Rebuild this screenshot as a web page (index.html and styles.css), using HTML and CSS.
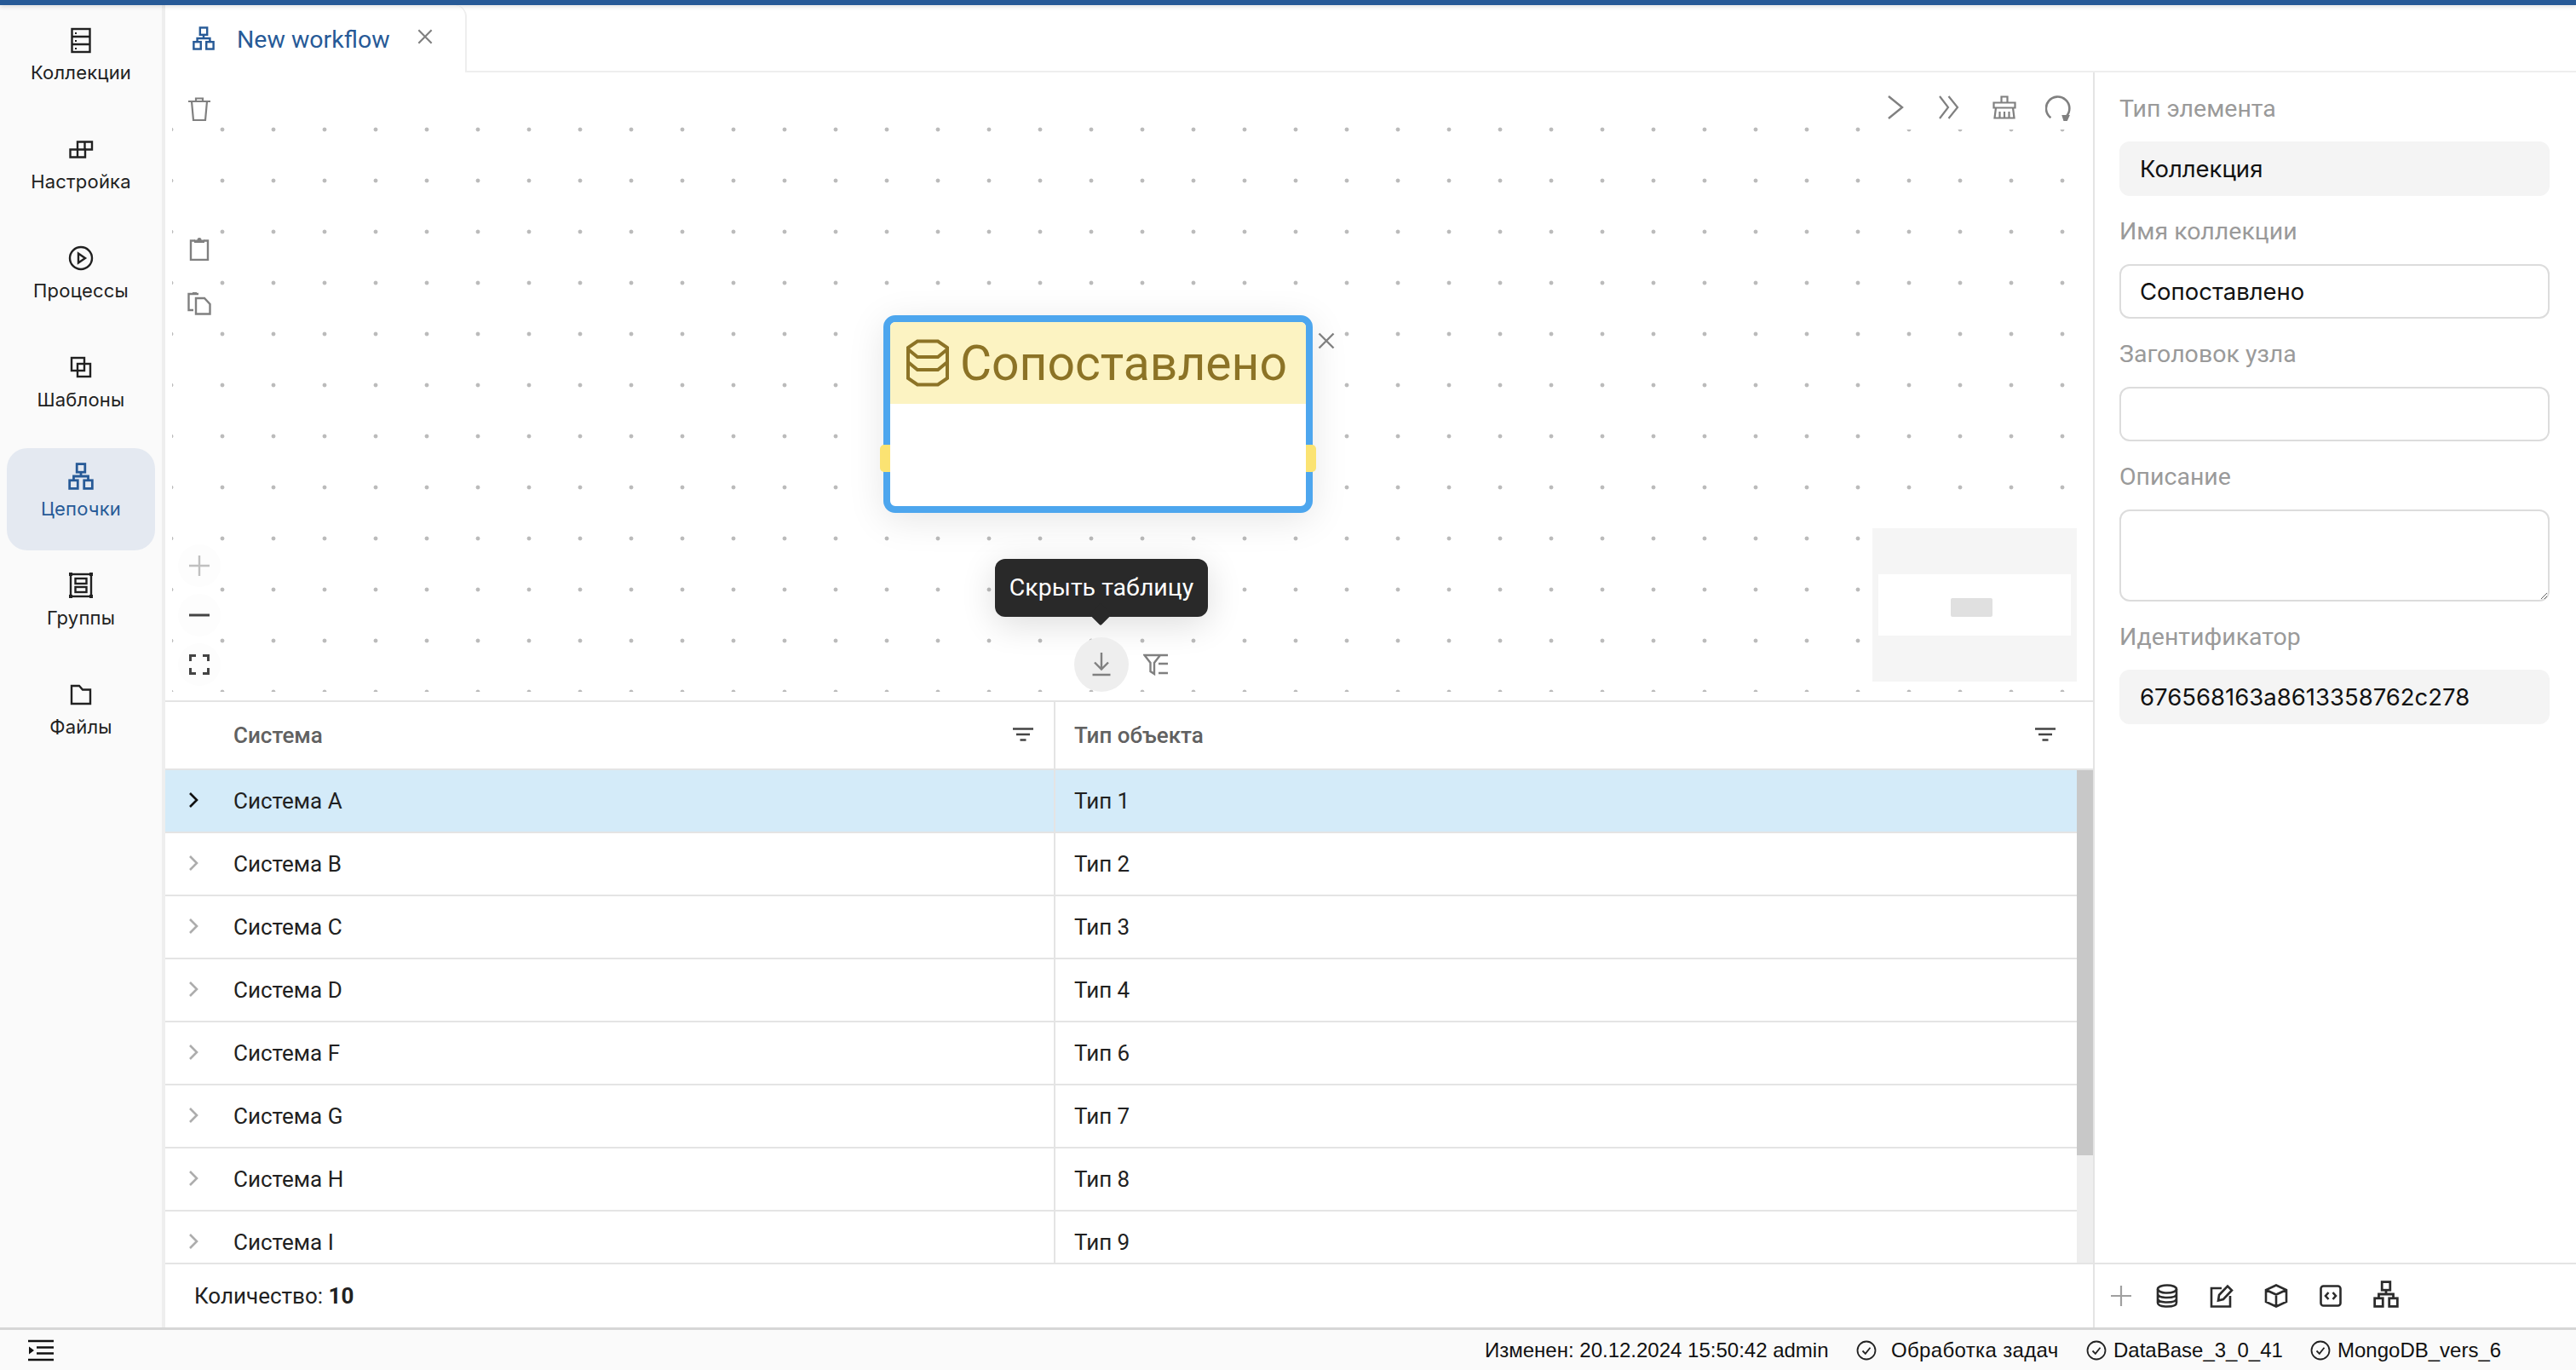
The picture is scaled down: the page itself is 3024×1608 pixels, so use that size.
FILE: index.html
```html
<!DOCTYPE html>
<html lang="ru">
<head>
<meta charset="utf-8">
<title>New workflow</title>
<link rel="stylesheet" href="styles.css">
</head>
<body>
<svg class="sprite" width="0" height="0">
  <symbol id="org" viewBox="0 0 28 30"><g fill="none" stroke="currentColor" stroke-width="2.6"><rect x="9.5" y="1.5" width="9" height="9"/><rect x="1.5" y="19.5" width="9" height="9"/><rect x="17.5" y="19.5" width="9" height="9"/><path d="M14 10.5V15M6 19.5V15H22V19.5"/></g></symbol>
  <symbol id="funnel" viewBox="0 0 24 16"><path d="M0 1.5H24M4 8H20M8.500 14.500H15.500" fill="none" stroke="currentColor" stroke-width="2.500"/></symbol>
  <symbol id="chev" viewBox="0 0 14 20"><path d="M3 2L11 10L3 18" fill="none" stroke="currentColor" stroke-width="2.600"/></symbol>
  <symbol id="check" viewBox="0 0 24 24"><circle cx="12" cy="12" r="10.500" fill="none" stroke="currentColor" stroke-width="1.800"/><path d="M7.500 12.500L10.800 15.800L16.500 8.800" fill="none" stroke="currentColor" stroke-width="1.800"/></symbol>
  <symbol id="x" viewBox="0 0 20 20"><path d="M1.500 1.500L18.500 18.500M18.500 1.500L1.500 18.500" fill="none" stroke="currentColor" stroke-width="2.400"/></symbol>
</svg>
<div class="app">
  <div class="topbar"></div>
  <div class="main">
    <nav class="sidebar">
      <a class="nav-item"><svg class="nav-icon" viewBox="0 0 32 32"><g fill="none" stroke="currentColor" stroke-width="2.400"><rect x="5.500" y="3" width="21" height="27"/><path d="M5.500 12H26.500M5.500 21H26.500"/></g><path d="M9 7h2v2H9zM9 16h2v2H9zM9 25h2v2H9z" fill="currentColor"/></svg><span>Коллекции</span></a>
      <a class="nav-item"><svg class="nav-icon" viewBox="0 0 32 32"><g fill="none" stroke="currentColor" stroke-width="2.400"><path d="M3.500 16.500H21V25.500H3.500ZM12 16.500V25.500"/><path d="M12 16.500V7.500H29V16.500H21M20.500 7.500V16.500"/></g></svg><span>Настройка</span></a>
      <a class="nav-item"><svg class="nav-icon" viewBox="0 0 32 32"><g fill="none" stroke="currentColor" stroke-width="2.400"><circle cx="16" cy="16" r="13"/><path d="M13 10.500L21 16L13 21.500Z"/></g></svg><span>Процессы</span></a>
      <a class="nav-item"><svg class="nav-icon" viewBox="0 0 32 32"><g fill="none" stroke="currentColor" stroke-width="2.400"><rect x="5" y="5" width="15" height="15"/><rect x="12" y="12" width="15" height="15"/></g></svg><span>Шаблоны</span></a>
      <a class="nav-item active"><svg class="nav-icon" viewBox="0 0 28 30"><use href="#org"/></svg><span>Цепочки</span></a>
      <a class="nav-item"><svg class="nav-icon" viewBox="0 0 32 32"><g fill="none" stroke="currentColor" stroke-width="2.400"><rect x="4" y="3" width="24" height="26"/><rect x="9.500" y="8" width="13" height="6"/><rect x="9.500" y="18" width="13" height="6"/></g><path d="M2 1h4v4H2zM26 1h4v4h-4zM2 27h4v4H2zM26 27h4v4h-4z" fill="currentColor"/></svg><span>Группы</span></a>
      <a class="nav-item"><svg class="nav-icon" viewBox="0 0 32 32"><path d="M5 6H14L18 10.500H27V27H5Z" fill="none" stroke="currentColor" stroke-width="2.400"/></svg><span>Файлы</span></a>
    </nav>
    <div class="workspace">
      <div class="tabs">
        <div class="tab">
          <svg class="tab-icon"><use href="#org"/></svg>
          <span class="tab-title">New workflow</span>
          <svg class="tab-close"><use href="#x"/></svg>
        </div>
      </div>
      <div class="content">
        <div class="center">
          <section class="canvas">
            <div class="dots"></div>

            <div class="tool-column tool-edit">
              <svg class="tool" viewBox="0 0 28 28"><g fill="none" stroke="#808080" stroke-width="2.200"><path d="M1 5H27M5 5L7 27H21L23 5M10 5V1.500H18V5"/></g></svg>
              <svg class="tool tool-paste" viewBox="0 0 28 28"><g fill="none" stroke="#808080" stroke-width="2.400"><path d="M9 4.500H4V27H24V4.500H19"/></g><path d="M8 7V3.500H11.500A2.500 2.500 0 0 1 16.500 3.500H20V7Z" fill="#808080"/></svg>
              <svg class="tool tool-copy" viewBox="0 0 28 28"><g fill="none" stroke="#808080" stroke-width="2.400"><path d="M7 22H1.500V3H13"/><path d="M10 8H20L26.500 15V26.500H10Z"/></g><path d="M6 3.500H11V1H6Z" fill="#808080"/></svg>
            </div>

            <div class="tool-column tool-zoom">
              <div class="zoom-btn"><svg viewBox="0 0 24 24"><path d="M12 0V24M0 12H24" stroke="#c0c0c0" stroke-width="2.400"/></svg></div>
              <div class="zoom-btn"><svg viewBox="0 0 24 24"><path d="M0 12H24" stroke="#444" stroke-width="3"/></svg></div>
              <div class="zoom-btn"><svg viewBox="0 0 24 24"><path d="M8 1.500H1.500V8M16 1.500H22.500V8M8 22.500H1.500V16M16 22.500H22.500V16" fill="none" stroke="#444" stroke-width="3"/></svg></div>
            </div>

            <div class="run-tools">
              <svg class="run-chev" viewBox="0 0 20 28"><path d="M1 1L17 14L1 27" fill="none" stroke="#808080" stroke-width="2.400"/></svg>
              <svg class="run-double" viewBox="0 0 24 28"><path d="M1 1L11 14L1 27M11.500 1L22 14L11.500 27" fill="none" stroke="#808080" stroke-width="2.200"/></svg>
              <svg class="run-broom" viewBox="0 0 28 28"><g fill="none" stroke="#808080" stroke-width="2.200"><path d="M10.500 8.500V1.500H17.500V8.500M1.500 8.500H26.500V14.500H1.500ZM4 14.500L2.500 26.500H25.500L24 14.500M8.500 19V26.500M14 19V26.500M19.500 19V26.500"/></g></svg>
              <svg class="run-reload" viewBox="0 0 28 28"><g fill="none" stroke="#808080" stroke-width="2.400"><path d="M6 24.500A12.800 12.800 0 1 1 23 23"/></g><path d="M18 21.500H27L24 28H20Z" fill="#808080"/></svg>
            </div>

            <article class="node">
              <div class="node-frame">
                <header class="node-head">
                  <svg class="node-icon" viewBox="0 0 50 56"><path d="M13 2.500H37L48 10V46L37 53.500H13L2 46V10ZM2 12L13 21H37L48 12M2 27L13 36H37L48 27" fill="none" stroke="#8c7326" stroke-width="4"/></svg>
                  <span>Сопоставлено</span>
                </header>
              </div>
              <i class="handle handle-left"></i>
              <i class="handle handle-right"></i>
              <svg class="node-close"><use href="#x"/></svg>
            </article>

            <div class="tooltip">Скрыть таблицу</div>
            <div class="table-toggle"><svg viewBox="0 0 24 28"><path d="M12 0V19M4 11.500L12 19.500L20 11.500M1.500 26H22.500" fill="none" stroke="#808080" stroke-width="2.400"/></svg></div>
            <svg class="filter-list" viewBox="0 0 30 26"><g fill="none" stroke="#808080" stroke-width="2.400"><path d="M1.500 2H20L13 11V24L8.500 21V11ZM20 2H29M18 12H29M18 23H29"/></g></svg>

            <div class="minimap"><div class="minimap-view"><div class="minimap-node"></div></div></div>
          </section>

          <section class="grid">
            <div class="grid-head">
              <div class="cell cell-a"><span>Система</span><svg class="head-filter"><use href="#funnel"/></svg></div>
              <div class="cell cell-b"><span>Тип объекта</span><svg class="head-filter"><use href="#funnel"/></svg></div>
            </div>
            <div class="grid-body">
              <div class="rows">
                <div class="row selected"><svg class="row-chev"><use href="#chev"/></svg><div class="cell cell-a">Система A</div><div class="cell cell-b">Тип 1</div></div>
                <div class="row"><svg class="row-chev"><use href="#chev"/></svg><div class="cell cell-a">Система B</div><div class="cell cell-b">Тип 2</div></div>
                <div class="row"><svg class="row-chev"><use href="#chev"/></svg><div class="cell cell-a">Система C</div><div class="cell cell-b">Тип 3</div></div>
                <div class="row"><svg class="row-chev"><use href="#chev"/></svg><div class="cell cell-a">Система D</div><div class="cell cell-b">Тип 4</div></div>
                <div class="row"><svg class="row-chev"><use href="#chev"/></svg><div class="cell cell-a">Система F</div><div class="cell cell-b">Тип 6</div></div>
                <div class="row"><svg class="row-chev"><use href="#chev"/></svg><div class="cell cell-a">Система G</div><div class="cell cell-b">Тип 7</div></div>
                <div class="row"><svg class="row-chev"><use href="#chev"/></svg><div class="cell cell-a">Система H</div><div class="cell cell-b">Тип 8</div></div>
                <div class="row"><svg class="row-chev"><use href="#chev"/></svg><div class="cell cell-a">Система I</div><div class="cell cell-b">Тип 9</div></div>
              </div>
              <div class="scrolltrack"><div class="scrollthumb"></div></div>
            </div>
            <footer class="grid-foot">Количество:&nbsp;<b>10</b></footer>
          </section>
        </div>

        <aside class="panel">
          <div class="fields">
            <label class="field"><span class="field-label">Тип элемента</span><input class="input readonly" value="Коллекция" readonly></label>
            <label class="field"><span class="field-label">Имя коллекции</span><input class="input" value="Сопоставлено"></label>
            <label class="field"><span class="field-label">Заголовок узла</span><input class="input" value=""></label>
            <label class="field"><span class="field-label">Описание</span><textarea class="input area"></textarea></label>
            <label class="field"><span class="field-label">Идентификатор</span><input class="input readonly" value="676568163a8613358762c278" readonly></label>
          </div>
          <div class="panel-foot">
            <svg class="pf pf-plus" viewBox="0 0 24 24"><path d="M12 0V24M0 12H24" stroke="#a0a0a0" stroke-width="2.200"/></svg>
            <svg class="pf" viewBox="0 0 28 28"><g fill="none" stroke="#2b2b2b" stroke-width="2.600"><ellipse cx="14" cy="6" rx="11" ry="4.500"/><path d="M3 6V22C3 25 8 26.500 14 26.500S25 25 25 22V6M3 11.500C3 14.500 8 16 14 16S25 14.500 25 11.500M3 17C3 20 8 21.500 14 21.500S25 20 25 17"/></g></svg>
            <svg class="pf" viewBox="0 0 28 28"><g fill="none" stroke="#2b2b2b" stroke-width="2.600"><path d="M14 5H2V26.500H24V14"/><path d="M11 13L21 2.500L26 7.500L16 18L10 19.500Z"/></g></svg>
            <svg class="pf" viewBox="0 0 28 28"><g fill="none" stroke="#2b2b2b" stroke-width="2.600"><path d="M14 1.500L26 7V21L14 26.500L2 21V7ZM2 7L14 12.500L26 7M14 12.500V26.500"/></g></svg>
            <svg class="pf" viewBox="0 0 28 28"><g fill="none" stroke="#2b2b2b" stroke-width="2.600"><rect x="2.500" y="2.500" width="23" height="23" rx="3"/><path d="M11.500 10L8 14L11.500 18M16.500 10L20 14L16.500 18"/></g></svg>
            <svg class="pf pf-org"><use href="#org"/></svg>
          </div>
        </aside>
      </div>
    </div>
  </div>
  <footer class="status">
    <svg class="status-menu" viewBox="0 0 30 26"><path d="M0 2H30M10 9.500H30M10 16.500H30M0 24H30" stroke="#111" stroke-width="2.400"/><path d="M1 8.500L7 13L1 17.500Z" fill="#111"/></svg>
    <span class="status-modified">Изменен: 20.12.2024 15:50:42 admin</span>
    <span class="status-item status-tasks"><svg><use href="#check"/></svg>Обработка задач</span>
    <span class="status-item status-db"><svg><use href="#check"/></svg>DataBase_3_0_41</span>
    <span class="status-item status-mongo"><svg><use href="#check"/></svg>MongoDB_vers_6</span>
  </footer>
</div>
</body>
</html>
```
FILE: styles.css
```css
* { box-sizing: border-box; }
html, body { margin: 0; height: 100%; }
body { font-family: Roboto, "Liberation Sans", sans-serif; color: #212121; background: #fff; overflow: hidden; }
.sprite { position: absolute; }
.app { display: flex; flex-direction: column; width: 3024px; height: 1608px; }
.topbar { flex: none; height: 6px; background: #275a97; box-shadow: 0 2px 5px rgba(0,0,0,.12); position: relative; z-index: 3; }
.main { flex: 1; display: flex; min-height: 0; }

.sidebar { flex: none; width: 194px; padding: 8px 8px 0 8px; background: #fafafa; border-right: 4px solid #eeeeee; display: flex; flex-direction: column; gap: 8px; }
.nav-item { height: 120px; border-radius: 24px; display: flex; flex-direction: column; align-items: center; padding-top: 17px; font-family: Inter, Roboto, sans-serif; font-size: 22px; letter-spacing: .2px; line-height: 28px; color: #212121; }
.nav-item span { margin-top: 8px; }
.nav-icon { width: 32px; height: 32px; display: block; }
.nav-item.active { background: #e4e9f1; color: #275a97; }

.workspace { flex: 1; min-width: 0; display: flex; flex-direction: column; }
.tabs { flex: none; height: 79px; border-bottom: 2px solid #eeeeee; display: flex; }
.tab { width: 354px; height: 79px; padding: 0 40px 0 32px; display: flex; align-items: center; background: #fff; border-right: 2px solid #eeeeee; border-top-right-radius: 14px; border-top-left-radius: 14px; color: #275a97; }
.tab-icon { width: 26px; height: 28px; flex: none; position: relative; top: -1px; }
.tab-title { margin-left: 26px; font-size: 28.5px; line-height: 36px; white-space: nowrap; position: relative; top: 1px; }
.tab-close { width: 18px; height: 18px; margin-left: 32px; color: #808080; flex: none; position: relative; top: -3px; }

.content { flex: 1; min-height: 0; display: flex; }
.center { flex: none; width: 2263px; display: flex; flex-direction: column; }

.canvas { flex: none; height: 737px; position: relative; overflow: hidden; background: #fff; }
.dots { position: absolute; left: 8px; right: 0; top: 15px; bottom: 10px; background-image: radial-gradient(circle, #bbbbbb 2px, transparent 2.800px); background-size: 60px 60px; background-position: 29px 22px; }

.tool-column { position: absolute; left: 26px; width: 28px; display: flex; flex-direction: column; }
.tool-edit { top: 29px; }
.tool { width: 28px; height: 28px; display: block; }
.tool-paste { margin-top: 136px; }
.tool-copy { margin-top: 36px; }
.tool-zoom { left: 15px; top: 554px; width: 50px; gap: 8px; }
.zoom-btn { width: 50px; height: 50px; border-radius: 50%; background: #fdfdfd; display: flex; align-items: center; justify-content: center; }
.zoom-btn svg { width: 24px; height: 24px; display: block; }

.run-tools { position: absolute; left: 1996px; top: 5px; width: 260px; height: 62px; padding: 22px 0 0 26px; background: #fff; display: flex; align-items: flex-start; }
.run-chev { width: 20px; height: 28px; }
.run-double { width: 24px; height: 28px; margin-left: 40px; }
.run-broom { width: 28px; height: 28px; margin-left: 39px; }
.run-reload { width: 30px; height: 30px; margin-left: 34px; }

.node { position: absolute; left: 843px; top: 285px; width: 504px; height: 232px; }
.node-frame { height: 100%; border: 8px solid #4da6ee; border-radius: 14px; background: #fff; box-shadow: 0 8px 44px rgba(0,0,0,.1); }
.node-head { height: 96px; background: #fcf3c2; border-radius: 6px 6px 0 0; display: flex; align-items: center; padding-left: 19px; color: #8c7326; font-size: 57px; line-height: 64px; white-space: nowrap; }
.node-icon { width: 50px; height: 56px; flex: none; }
.node-head span { margin-left: 13px; position: relative; top: 1px; }
.handle { position: absolute; top: 152px; width: 12px; height: 32px; background: #fbe372; }
.handle-left { left: -4px; border-radius: 5px 0 0 5px; }
.handle-right { right: -4px; border-radius: 0 5px 5px 0; }
.node-close { position: absolute; left: 510px; top: 20px; width: 20px; height: 20px; color: #808080; }

.tooltip { position: absolute; left: 974px; top: 571px; width: 250px; height: 68px; background: #292929; color: #fff; border-radius: 12px; font-size: 28.500px; line-height: 68px; text-align: center; box-shadow: 0 8px 40px rgba(0,0,0,.14); white-space: nowrap; }
.tooltip::after { content: ""; position: absolute; left: 114px; top: 60px; width: 20px; height: 20px; margin-top: -5px; background: #292929; transform: rotate(45deg) scale(.95); border-radius: 2px; }
.table-toggle { position: absolute; left: 1067px; top: 663px; width: 64px; height: 64px; border-radius: 50%; background: #eeeeee; display: flex; align-items: center; justify-content: center; }
.table-toggle svg { width: 24px; height: 28px; }
.filter-list { position: absolute; left: 1148px; top: 682px; width: 30px; height: 26px; }

.minimap { position: absolute; left: 2004px; top: 535px; width: 240px; height: 180px; background: #f5f5f5; padding: 54px 7px 0; }
.minimap-view { height: 72px; background: #fff; padding: 28px 0 0 85px; }
.minimap-node { width: 49px; height: 22px; background: #e0e0e0; border-radius: 2px; }

.grid { flex: 1; min-height: 0; border-top: 2px solid #e4e4e4; display: flex; flex-direction: column; }
.grid-head { flex: none; height: 80px; border-bottom: 2px solid #e4e4e4; display: flex; font-size: 26px; font-weight: 500; color: #616161; }
.grid-head .cell { position: relative; }
.head-filter { position: absolute; top: 30px; width: 24px; height: 16px; color: #444; }
.cell { display: flex; align-items: center; }
.cell-a { width: 1045px; flex: none; padding-left: 80px; border-right: 2px solid #e4e4e4; }
.cell-b { flex: 1; padding-left: 22px; }
.grid-head .cell-b .head-filter { right: 44px; }
.grid-head .cell-a .head-filter { right: 24px; }

.grid-body { flex: 1; min-height: 0; display: flex; overflow: hidden; }
.rows { flex: 1; min-width: 0; }
.row { height: 74px; border-bottom: 2px solid #e4e4e4; display: flex; position: relative; font-size: 26px; color: #212121; }
.row.selected { background: #d4ebf9; }
.row-chev { position: absolute; left: 26px; top: 25px; width: 14px; height: 20px; color: #adadad; }
.row.selected .row-chev { color: #111; }
.scrolltrack { flex: none; width: 19px; background: #eeeeee; }
.scrollthumb { height: 452px; background: #c8c8c8; }
.grid-foot { flex: none; height: 76px; border-top: 2px solid #e4e4e4; padding-left: 34px; display: flex; align-items: center; font-size: 26px; color: #212121; }
.grid-foot b { font-weight: 700; }

.panel { flex: 1; min-width: 0; border-left: 2px solid #e4e4e4; display: flex; flex-direction: column; }
.fields { flex: 1; padding: 23px 31px 0 29px; display: flex; flex-direction: column; gap: 22px; }
.field { display: flex; flex-direction: column; gap: 18px; }
.field-label { height: 40px; line-height: 40px; font-size: 28.5px; color: #9a9a9a; }
.input { width: 100%; height: 64px; padding: 0 22px; border: 2px solid #dcdcdc; border-radius: 12px; background: #fff; font-family: Inter, Roboto, sans-serif; font-size: 27.5px; color: #111; outline: none; display: block; }
.readonly { background: #f4f4f4; border-color: #f4f4f4; }
.area { height: 108px; resize: vertical; }
.panel-foot { flex: none; height: 76px; border-top: 2px solid #e4e4e4; padding: 0 0 0 19px; display: flex; align-items: center; }
.pf { width: 28px; height: 28px; margin-right: 36px; flex: none; }
.pf-plus { width: 24px; height: 24px; margin-right: 28px; }
.pf-org { width: 30px; height: 32px; margin: -4px 0 0 0; color: #2b2b2b; }

.status { flex: none; height: 50px; background: #fafafa; border-top: 3px solid #d6d6d6; display: flex; align-items: center; font-family: "Liberation Sans", Arial, sans-serif; font-size: 24px; color: #111; white-space: nowrap; padding-left: 33px; }
.status-menu { width: 30px; height: 26px; flex: none; margin-right: 1680px; }
.status-modified { flex: none; width: 436px; }
.status-item { display: flex; align-items: center; flex: none; }
.status-item svg { width: 24px; height: 24px; flex: none; margin-right: 8px; color: #222; }
.status-tasks { width: 270px; letter-spacing: .35px; }
.status-tasks svg { margin-right: 17px; }
.status-db { width: 263px; }
```
